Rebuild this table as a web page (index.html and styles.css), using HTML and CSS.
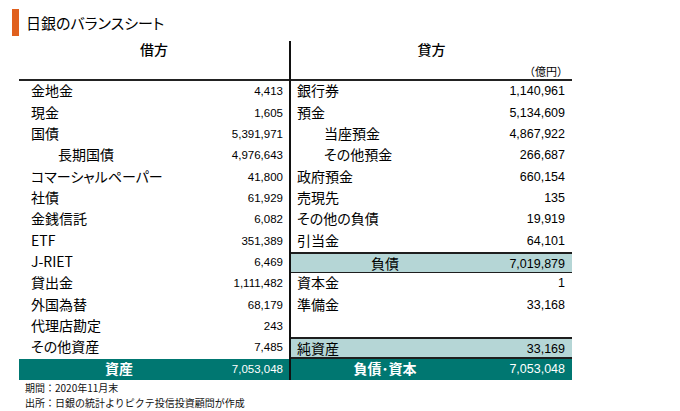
FILE: index.html
```html
<!DOCTYPE html>
<html lang="ja">
<head>
<meta charset="utf-8">
<title>日銀のバランスシート</title>
<link rel="stylesheet" href="styles.css">
</head>
<body>
<div class="page">
  <h1 class="title">日銀のバランスシート</h1>
  <div class="sheet">
    <div class="side side-left">
      <div class="head head-left"><span class="head-title">借方</span></div>
      <div class="row"><span class="label">金地金</span><span class="num">4,413</span></div>
      <div class="row"><span class="label">現金</span><span class="num">1,605</span></div>
      <div class="row"><span class="label">国債</span><span class="num">5,391,971</span></div>
      <div class="row"><span class="label indent">長期国債</span><span class="num">4,976,643</span></div>
      <div class="row"><span class="label">コマーシャルペーパー</span><span class="num">41,800</span></div>
      <div class="row"><span class="label">社債</span><span class="num">61,929</span></div>
      <div class="row"><span class="label">金銭信託</span><span class="num">6,082</span></div>
      <div class="row"><span class="label">ETF</span><span class="num">351,389</span></div>
      <div class="row"><span class="label">J-RIET</span><span class="num">6,469</span></div>
      <div class="row"><span class="label">貸出金</span><span class="num">1,111,482</span></div>
      <div class="row"><span class="label">外国為替</span><span class="num">68,179</span></div>
      <div class="row"><span class="label">代理店勘定</span><span class="num">243</span></div>
      <div class="row"><span class="label">その他資産</span><span class="num">7,485</span></div>
      <div class="row total"><span class="label center">資産</span><span class="num">7,053,048</span></div>
    </div>
    <div class="side side-right">
      <div class="head head-right"><span class="head-title">貸方</span><span class="unit">（億円）</span></div>
      <div class="row"><span class="label">銀行券</span><span class="num">1,140,961</span></div>
      <div class="row"><span class="label">預金</span><span class="num">5,134,609</span></div>
      <div class="row"><span class="label indent">当座預金</span><span class="num">4,867,922</span></div>
      <div class="row"><span class="label indent">その他預金</span><span class="num">266,687</span></div>
      <div class="row"><span class="label">政府預金</span><span class="num">660,154</span></div>
      <div class="row"><span class="label">売現先</span><span class="num">135</span></div>
      <div class="row"><span class="label">その他の負債</span><span class="num">19,919</span></div>
      <div class="row"><span class="label">引当金</span><span class="num">64,101</span></div>
      <div class="row subtotal liab"><span class="label center">負債</span><span class="num">7,019,879</span></div>
      <div class="row"><span class="label">資本金</span><span class="num">1</span></div>
      <div class="row"><span class="label">準備金</span><span class="num">33,168</span></div>
      <div class="row"><span class="label"></span><span class="num"></span></div>
      <div class="row subtotal equity"><span class="label">純資産</span><span class="num">33,169</span></div>
      <div class="row total"><span class="label center">負債･資本</span><span class="num">7,053,048</span></div>
    </div>
  </div>
  <div class="notes">
    <p class="note">期間：2020年11月末</p>
    <p class="note">出所：日銀の統計よりピクテ投信投資顧問が作成</p>
  </div>
</div>
</body>
</html>
```

FILE: styles.css
```css
* { box-sizing: border-box; }

html, body {
  margin: 0;
  padding: 0;
  background: #ffffff;
}

body {
  font-family: "Noto Sans CJK JP", "Noto Sans", sans-serif;
  color: #000000;
}

.page {
  width: 680px;
  height: 411px;
  padding-top: 9px;
}

.title {
  margin: 0 0 0 12px;
  height: 27px;
  display: flex;
  align-items: center;
  border-left: 7px solid #e0601e;
  padding-left: 7px;
  padding-bottom: 1px;
  font-size: 15px;
  font-weight: 400;
  font-feature-settings: "palt";
  color: #000000;
}

.sheet {
  margin: 5px 0 0 19px;
  width: 553px;
  display: flex;
}

.side {
  display: flex;
  flex-direction: column;
}

.side-left {
  width: 272px;
  border-right: 2px solid #111111;
}

.side-right {
  width: 281px;
}

.head {
  height: 40px;
  border-bottom: 2px solid #222222;
  display: flex;
  flex-direction: column;
  align-items: center;
}

.head-title {
  font-size: 14px;
  line-height: 16px;
  font-weight: 500;
}

.head-right .unit {
  align-self: flex-end;
  margin-top: 7px;
  padding-right: 4px;
  font-size: 11px;
  line-height: 14px;
}

.row {
  height: 21.36px;
  display: grid;
  align-items: center;
}

.side-left .row {
  grid-template-columns: 200px 1fr;
}

.side-right .row {
  grid-template-columns: 188px 1fr;
}

.label {
  font-size: 14px;
  line-height: 18px;
  padding-bottom: 3px;
  white-space: nowrap;
  font-feature-settings: "palt";
}

.side-left .label { padding-left: 12px; }
.side-right .label { padding-left: 6px; }

.label.indent { padding-left: 39px; }
.side-right .label.indent { padding-left: 33px; }

.label.center {
  text-align: center;
  padding-left: 0;
}

.num {
  font-family: "Liberation Sans", Arial, sans-serif;
  text-align: right;
  white-space: nowrap;
  padding-bottom: 1px;
}

.side-left .num {
  font-size: 11.5px;
  padding-right: 6px;
}

.side-right .num {
  font-size: 12.5px;
  padding-right: 7px;
}

.subtotal {
  background: #b5d6d6;
  border-top: 2px solid #1e1e1e;
}

.subtotal.liab {
  border-bottom: 1px solid #1e1e1e;
}

.subtotal.equity {
  border-bottom: 2px solid #1e1e1e;
}

.total {
  background: #007771;
  color: #ffffff;
}

.total .label {
  font-weight: 700;
}

.notes {
  padding-left: 6px;
  margin-left: 19px;
}

.note {
  margin: 0;
  font-size: 10px;
  line-height: 15px;
  color: #111111;
}
```
